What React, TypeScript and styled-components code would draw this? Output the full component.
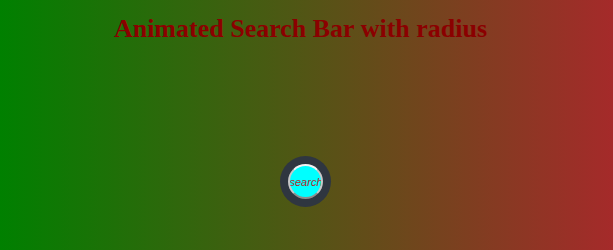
import React from "react";
import styled, { createGlobalStyle } from "styled-components";

const GlobalStyle = createGlobalStyle`
  html, body {
    margin: 0;
    padding: 0;
  }
  body {
    width: 613px;
    height: 250px;
    overflow: hidden;
  }
`;

const Page = styled.div`
  width: 613px;
  height: 250px;
  box-sizing: border-box;
  padding-top: 14px;
  background: linear-gradient(to right, #008000, #a52a2a);
  display: flex;
  flex-direction: column;
  align-items: center;
`;

const Title = styled.h1`
  margin: 0 12px 0 0;
  font-family: "Liberation Serif", "Times New Roman", serif;
  font-weight: bold;
  font-size: 26px;
  line-height: 30px;
  color: #8b0000;
  white-space: nowrap;
`;

const SearchBox = styled.div`
  margin: 112px 3px 0 0;
  width: 51px;
  height: 51px;
  box-sizing: border-box;
  padding: 8px;
  border-radius: 50%;
  background: #2f3640;
  display: flex;
  align-items: center;
  justify-content: center;
`;

const SearchInput = styled.input`
  width: 35px;
  height: 35px;
  box-sizing: border-box;
  margin: 0;
  padding: 0;
  border-radius: 50%;
  border: 2px solid;
  border-color: #f2f2f2 #c8c8c8 #8e8e8e #c8c8c8;
  background: #00ffff;
  outline: none;
  text-align: center;
  font-family: "Liberation Sans", Arial, sans-serif;
  font-size: 11px;
  font-style: italic;
  color: #b02a2a;

  &::placeholder {
    color: #b02a2a;
    opacity: 1;
    font-style: italic;
  }
`;

export default function App() {
  return (
    <>
      <GlobalStyle />
      <Page>
        <Title>Animated Search Bar with radius</Title>
        <SearchBox>
          <SearchInput type="text" placeholder="search" />
        </SearchBox>
      </Page>
    </>
  );
}
